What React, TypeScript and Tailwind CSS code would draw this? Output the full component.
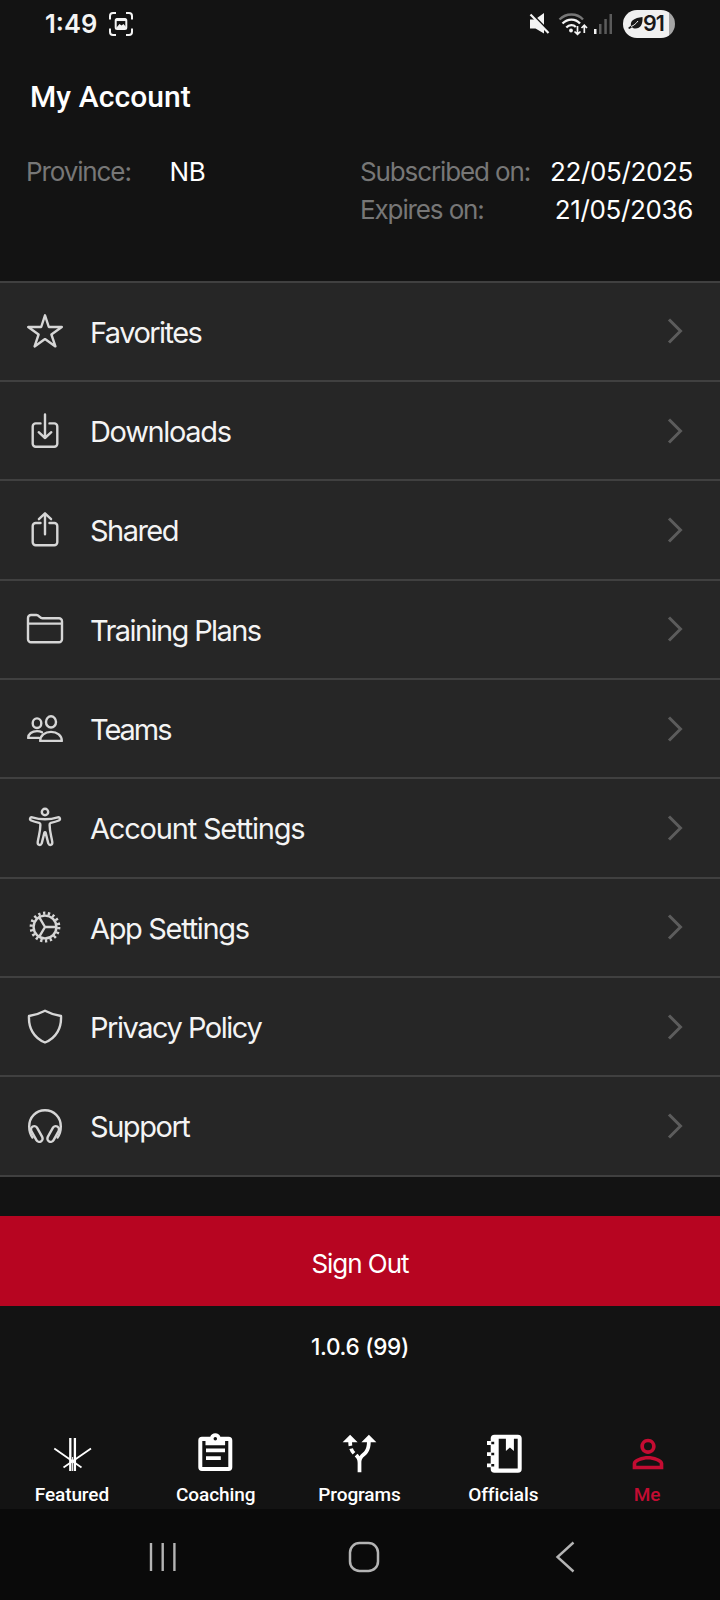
import React from 'react';
import { MdAltRoute, MdPersonOutline } from 'react-icons/md';

interface MenuItem {
  label: string;
  icon: React.ReactNode;
  tracking?: string;
}

interface Tab {
  label: string;
  icon: React.ReactNode;
  active?: boolean;
}

const LineIcon: React.FC<{ children: React.ReactNode }> = ({ children }) => (
  <svg
    viewBox="0 0 40 40"
    className="h-10 w-10 shrink-0 overflow-visible text-[#d6d6d6]"
    fill="none"
    stroke="currentColor"
    strokeWidth="2.4"
    strokeLinecap="round"
    strokeLinejoin="round"
  >
    {children}
  </svg>
);

const menuItems: MenuItem[] = [
  {
    label: 'Favorites',
    tracking: 'tracking-[-0.053em]',
    icon: (
      <LineIcon>
        <path d="M20 4.3 23.8 16h13L26.4 23.5 30.4 35.4 20 28.1 9.6 35.4 13.6 23.5 3.2 16h13z" />
      </LineIcon>
    ),
  },
  {
    label: 'Downloads',
    icon: (
      <LineIcon>
        <path d="M15.5 12.4h-4.8a3 3 0 0 0-3 3v17.3a3 3 0 0 0 3 3h18.6a3 3 0 0 0 3-3V15.4a3 3 0 0 0-3-3h-4.8" />
        <path d="M20 3.5v23.5M13.7 21.2 20 27l6.3-5.8" />
      </LineIcon>
    ),
  },
  {
    label: 'Shared',
    tracking: 'tracking-[-0.053em]',
    icon: (
      <LineIcon>
        <path d="M15.5 13h-4.8a3 3 0 0 0-3 3v16.3a3 3 0 0 0 3 3h18.6a3 3 0 0 0 3-3V16a3 3 0 0 0-3-3h-4.8" />
        <path d="M20 24.3V3.5M13.9 9.2 20 3.3l6.1 5.9" />
      </LineIcon>
    ),
  },
  {
    label: 'Training Plans',
    tracking: 'tracking-[-0.055em]',
    icon: (
      <LineIcon>
        <path d="M3 30.2V9a3 3 0 0 1 3-3h5.5c2.6 0 3.2 3.2 6 3.2H34a3 3 0 0 1 3 3v18a3 3 0 0 1-3 3H6a3 3 0 0 1-3-3z" />
        <path d="M3 14.6h34" strokeLinecap="butt" />
      </LineIcon>
    ),
  },
  {
    label: 'Teams',
    tracking: 'tracking-[-0.07em]',
    icon: (
      <LineIcon>
        <ellipse cx="12" cy="14.2" rx="4.3" ry="4.8" />
        <ellipse cx="26" cy="12.9" rx="5" ry="5.6" />
        <path d="M14 28.9H3.2c0-4 3.8-6.800 8.800-6.800 2 0 3.700.4 5 1.200" />
        <path d="M15.2 31.9c0-5.3 4.6-9 10.8-9s10.8 3.7 10.8 9z" />
      </LineIcon>
    ),
  },
  {
    label: 'Account Settings',
    tracking: 'tracking-[-0.041em]',
    icon: (
      <LineIcon>
        <circle cx="20" cy="4" r="3.2" />
        <path d="M7.2 9.4c4 1.2 8.3 1.9 12.8 1.9s8.8-.7 12.8-1.9c2.200-.5 3 2.300 1 3.100-2.500 1-5.200 1.700-8 2.300-1 .3-1.300.8-1.200 2 .1 7.200 1.600 10.700 2.700 17.300.3 3.200-3 3.800-4 1.300L20.600 24.600c-.2-.6-1-.6-1.200 0l-2.700 10.800c-1 2.500-4.300 1.900-4-1.300 1.100-6.600 2.600-10.100 2.700-17.300.1-1.200-.2-1.700-1.200-2-2.800-.6-5.500-1.300-8-2.300-2-.8-1.200-3.600 1-3.100z" />
      </LineIcon>
    ),
  },
  {
    label: 'App Settings',
    icon: (
      <LineIcon>
        <circle cx="20" cy="20" r="11.4" />
        <circle cx="20" cy="20" r="13.8" strokeWidth="3.2" strokeDasharray="2.3 2.518" strokeLinecap="butt" />
        <path d="M20 20h11M20 20l-5.7-9.7M20 20l-5.7 9.7" />
      </LineIcon>
    ),
  },
  {
    label: 'Privacy Policy',
    tracking: 'tracking-[-0.051em]',
    icon: (
      <LineIcon>
        <path d="M20 3.7c4.800 2.600 10 4.400 16 5.300.6 11.600-4.500 22-16 26.500C8.500 31 3.400 20.600 4 9c6-.9 11.200-2.700 16-5.300z" />
      </LineIcon>
    ),
  },
  {
    label: 'Support',
    tracking: 'tracking-[-0.05em]',
    icon: (
      <LineIcon>
        <path d="M7.5 31.5C5.4 28.6 4.2 25 4.2 20.5 4.2 11.2 11 4.300 20 4.300s15.800 6.900 15.800 16.200c0 4.500-1.200 8.100-3.300 11" />
        <rect x="8.500" y="19.500" width="6.600" height="17" rx="3.300" transform="rotate(-29 11.800 28)" />
        <rect x="24.900" y="19.500" width="6.600" height="17" rx="3.300" transform="rotate(29 28.200 28)" />
      </LineIcon>
    ),
  },
];

const FeaturedIcon = () => (
  <svg viewBox="0 0 46 46" className="h-[46px] w-[46px]" fill="none" stroke="currentColor">
    <path d="M21.3 7v33M25.900 7v33" strokeWidth="2.300" />
    <path d="M23.600 26v14" strokeWidth="1" />
    <path d="M5.300 17.500 32.500 36.500M42 17.500 14.500 36.500" strokeWidth="1.800" />
  </svg>
);

const CoachingIcon = () => (
  <svg viewBox="0 0 46 46" className="h-[46px] w-[46px]" fill="currentColor">
    <path
      fillRule="evenodd"
      d="M9 5.800h8.200a5.400 5.400 0 0 1 10.200 0h8.200a3.700 3.700 0 0 1 3.700 3.700v26.800A3.700 3.700 0 0 1 35.600 40H9a3.700 3.700 0 0 1-3.700-3.700V9.500A3.700 3.700 0 0 1 9 5.800zM9.300 10v26h26V10h-3.200v4.200H12.500V10zM22.300 6a1.700 1.700 0 1 0 0 3.500 1.700 1.700 0 0 0 0-3.500z"
    />
    <path d="M13 17.500h19v3.800H13zM13 25.200h14.800V29H13z" />
  </svg>
);

const OfficialsIcon = () => (
  <svg viewBox="0 0 46 46" className="ml-[3px] h-[46px] w-[46px]" fill="currentColor">
    <path
      fillRule="evenodd"
      d="M12.500 3.700h23.400a3.800 3.800 0 0 1 3.800 3.800v30.400a3.800 3.800 0 0 1-3.800 3.800H12.500a3.800 3.800 0 0 1-3.800-3.800v-1.600H5v-3.800h3.700v-7.400H5v-3.800h3.700v-7.400H5v-3.800h3.700V7.500a3.800 3.800 0 0 1 3.800-3.800zM16.700 7.800v29.800h19V7.800h-3.800v12.300l-4-3.600-4 3.600V7.800zM9.300 10.700v2.600h2.900v-2.600zM9.300 21.700v2.600h2.900v-2.600zM9.300 32.900v2.600h2.900v-2.600z"
    />
  </svg>
);

const tabs: Tab[] = [
  { label: 'Featured', icon: <FeaturedIcon /> },
  { label: 'Coaching', icon: <CoachingIcon /> },
  { label: 'Programs', icon: <MdAltRoute size={45} /> },
  { label: 'Officials', icon: <OfficialsIcon /> },
  { label: 'Me', icon: <MdPersonOutline size={46} className="ml-[2px]" />, active: true },
];

const StatusBar = () => (
  <header className="flex h-[47px] items-center pr-[45px] pl-[45px] text-[#f4f4f4]">
    <span className="pt-px text-[25.5px] font-semibold">1:49</span>
    <svg viewBox="0 0 24 24" className="ml-[12px] h-6 w-6" fill="none" stroke="currentColor" strokeWidth="2">
      <path d="M1 7.500V4a3 3 0 0 1 3-3h3M17 1h3a3 3 0 0 1 3 3v3.500M23 16.500V20a3 3 0 0 1-3 3h-3M7 23H4a3 3 0 0 1-3-3v-3.500" />
      <rect x="6.700" y="7" width="10.600" height="10" rx="1.500" />
      <path d="M7 7.800h10" strokeWidth="2.500" />
      <path d="m7.500 15.500 3-3.500 2 1.500 2-1.500 2.500 3v1.500h-9.500z" fill="currentColor" stroke="none" />
    </svg>
    <div className="ml-auto flex items-center">
      <svg viewBox="0 0 21 22" className="h-[22px] w-[21px]" fill="currentColor">
        <path d="M1 6.500h5L15 0v20.500L6.500 15.500H1z" />
        <path d="M2.500 .5 21 19.500" stroke="#131313" strokeWidth="2" />
        <path d="M1.500 1.500 19.500 20" stroke="currentColor" strokeWidth="2.200" />
      </svg>
      <svg viewBox="0 0 30 24" className="ml-[8px] h-6 w-[30px]" fill="none" stroke="currentColor" strokeWidth="2.300">
        <path d="M1.500 7.500C8 .8 19 .8 25 7.500" stroke="#777777" />
        <path d="M4.500 11.500c5-5.200 13-5.200 17.500 0M8.300 15.500c3-3 7-3 9.500-.5" />
        <circle cx="13" cy="18.500" r="1.900" fill="currentColor" stroke="none" />
        <path d="M19.500 14v8M16.500 19.500l3 2.800 3-2.800M26.300 21v-7.500M23.500 16l2.800-2.800L29 16" strokeWidth="1.700" />
      </svg>
      <svg viewBox="0 0 18 20" className="ml-[6px] h-5 w-[18px]" fill="#5b5b5b">
        <rect x="0" y="15" width="2.500" height="5" fill="#f4f4f4" />
        <rect x="5" y="10" width="2.500" height="10" />
        <rect x="10.300" y="5" width="2.500" height="15" />
        <rect x="15.500" y="0" width="2.500" height="20" />
      </svg>
      <div className="ml-[11px] flex h-7 w-[52px] items-center rounded-full bg-linear-to-r from-[#f0f0f0] from-88% to-[#a5a5a5] to-88% pl-[5px] text-[#181818]">
        <svg viewBox="0 0 15 13" className="h-[13px] w-[15px]" fill="currentColor">
          <path d="M14.500 0c.5 7-2 11.500-7 11.500-1.600 0-2.700-.5-3.500-1.300L1.500 12 0 11l3-2.500C2 4 6 1 14.500 0z" />
          <path d="M3 9.500C6 8.500 8 6.500 10 4" stroke="#f0f0f0" strokeWidth="1" fill="none" />
        </svg>
        <span className="text-[21.5px] font-semibold tracking-[-0.05em]">91</span>
      </div>
    </div>
  </header>
);

const AccountInfo = () => (
  <section className="flex h-[127.8px] pr-[27px] pl-[26px] text-[26px] leading-[38px] tracking-[-0.014em] text-[#777777]">
    <dl className="flex w-[334px]">
      <dt className="w-[143.5px] tracking-[-0.043em]">Province:</dt>
      <dd className="text-white">NB</dd>
    </dl>
    <dl className="flex-1">
      <div className="flex justify-between">
        <dt className="tracking-[-0.043em]">Subscribed on:</dt>
        <dd className="text-white">22/05/2025</dd>
      </div>
      <div className="flex justify-between">
        <dt className="tracking-[-0.043em]">Expires on:</dt>
        <dd className="text-white">21/05/2036</dd>
      </div>
    </dl>
  </section>
);

const MenuRow: React.FC<MenuItem> = ({ label, icon, tracking = 'tracking-[-0.046em]' }) => (
  <li className="flex h-[99.33px] items-center border-t-2 border-[#404040] pr-[36px] pl-[25px]">
    {icon}
    <span className={`ml-[25px] flex-1 pt-[2px] text-[29px] text-[#f4f4f4] ${tracking}`}>{label}</span>
    <svg viewBox="0 0 18 28" className="h-7 w-[18px]" fill="none" stroke="#5c5c5c" strokeWidth="3">
      <path d="M3 2.500 14.500 14 3 25.500" />
    </svg>
  </li>
);

const TabBar = () => (
  <nav className="flex h-[78px] w-[719px] font-['Roboto',sans-serif]">
    {tabs.map((tab) => (
      <button
        key={tab.label}
        className={`flex flex-1 flex-col items-center ${tab.active ? 'text-[#c40c32]' : 'text-white'}`}
      >
        <span className="flex h-[46px] items-center">{tab.icon}</span>
        <span className="mt-[7px] text-[19px] leading-[22px] font-medium tracking-[-0.005em]">{tab.label}</span>
      </button>
    ))}
  </nav>
);

const SystemNav = () => (
  <footer className="flex h-[91px] items-center bg-[#0a0a0a] pt-[6px] pl-[148px] text-[#b4b4b4]">
    <svg viewBox="0 0 30 30" className="h-[30px] w-[30px]" fill="none" stroke="currentColor" strokeWidth="2.400">
      <path d="M3 1v28M14.700 1v28M26.400 1v28" />
    </svg>
    <svg viewBox="0 0 32 32" className="ml-[169.5px] h-8 w-8" fill="none" stroke="currentColor" strokeWidth="2.500">
      <rect x="2" y="2" width="28" height="28" rx="9.500" />
    </svg>
    <svg viewBox="0 0 20 32" className="ml-[175.5px] h-8 w-5" fill="none" stroke="currentColor" strokeWidth="2.400">
      <path d="M18.500 1.500 2.500 16l16 14.500" />
    </svg>
  </footer>
);

export default function App() {
  return (
    <div className="flex h-[1600px] w-[720px] flex-col overflow-hidden bg-[#131313] font-['Inter',sans-serif]">
      <StatusBar />
      <h1 className="h-[106px] pt-[30px] pl-[30px] font-['Roboto',sans-serif] text-[30px] leading-[40px] font-medium tracking-[0.003em] text-white">
        My Account
      </h1>
      <AccountInfo />
      <ul className="border-b-2 border-[#404040] bg-[#262626]">
        {menuItems.map((item) => (
          <MenuRow key={item.label} {...item} />
        ))}
      </ul>
      <button className="mt-[39.2px] h-[90px] w-full bg-[#b70521] pt-[5px] text-[26px] tracking-[-0.04em] text-white">
        Sign Out
      </button>
      <p className="mt-[26px] mb-[69px] text-center text-[22.5px] leading-[30px] font-medium tracking-[-0.012em] text-white">
        1.0.6 (99)
      </p>
      <TabBar />
      <SystemNav />
    </div>
  );
}
